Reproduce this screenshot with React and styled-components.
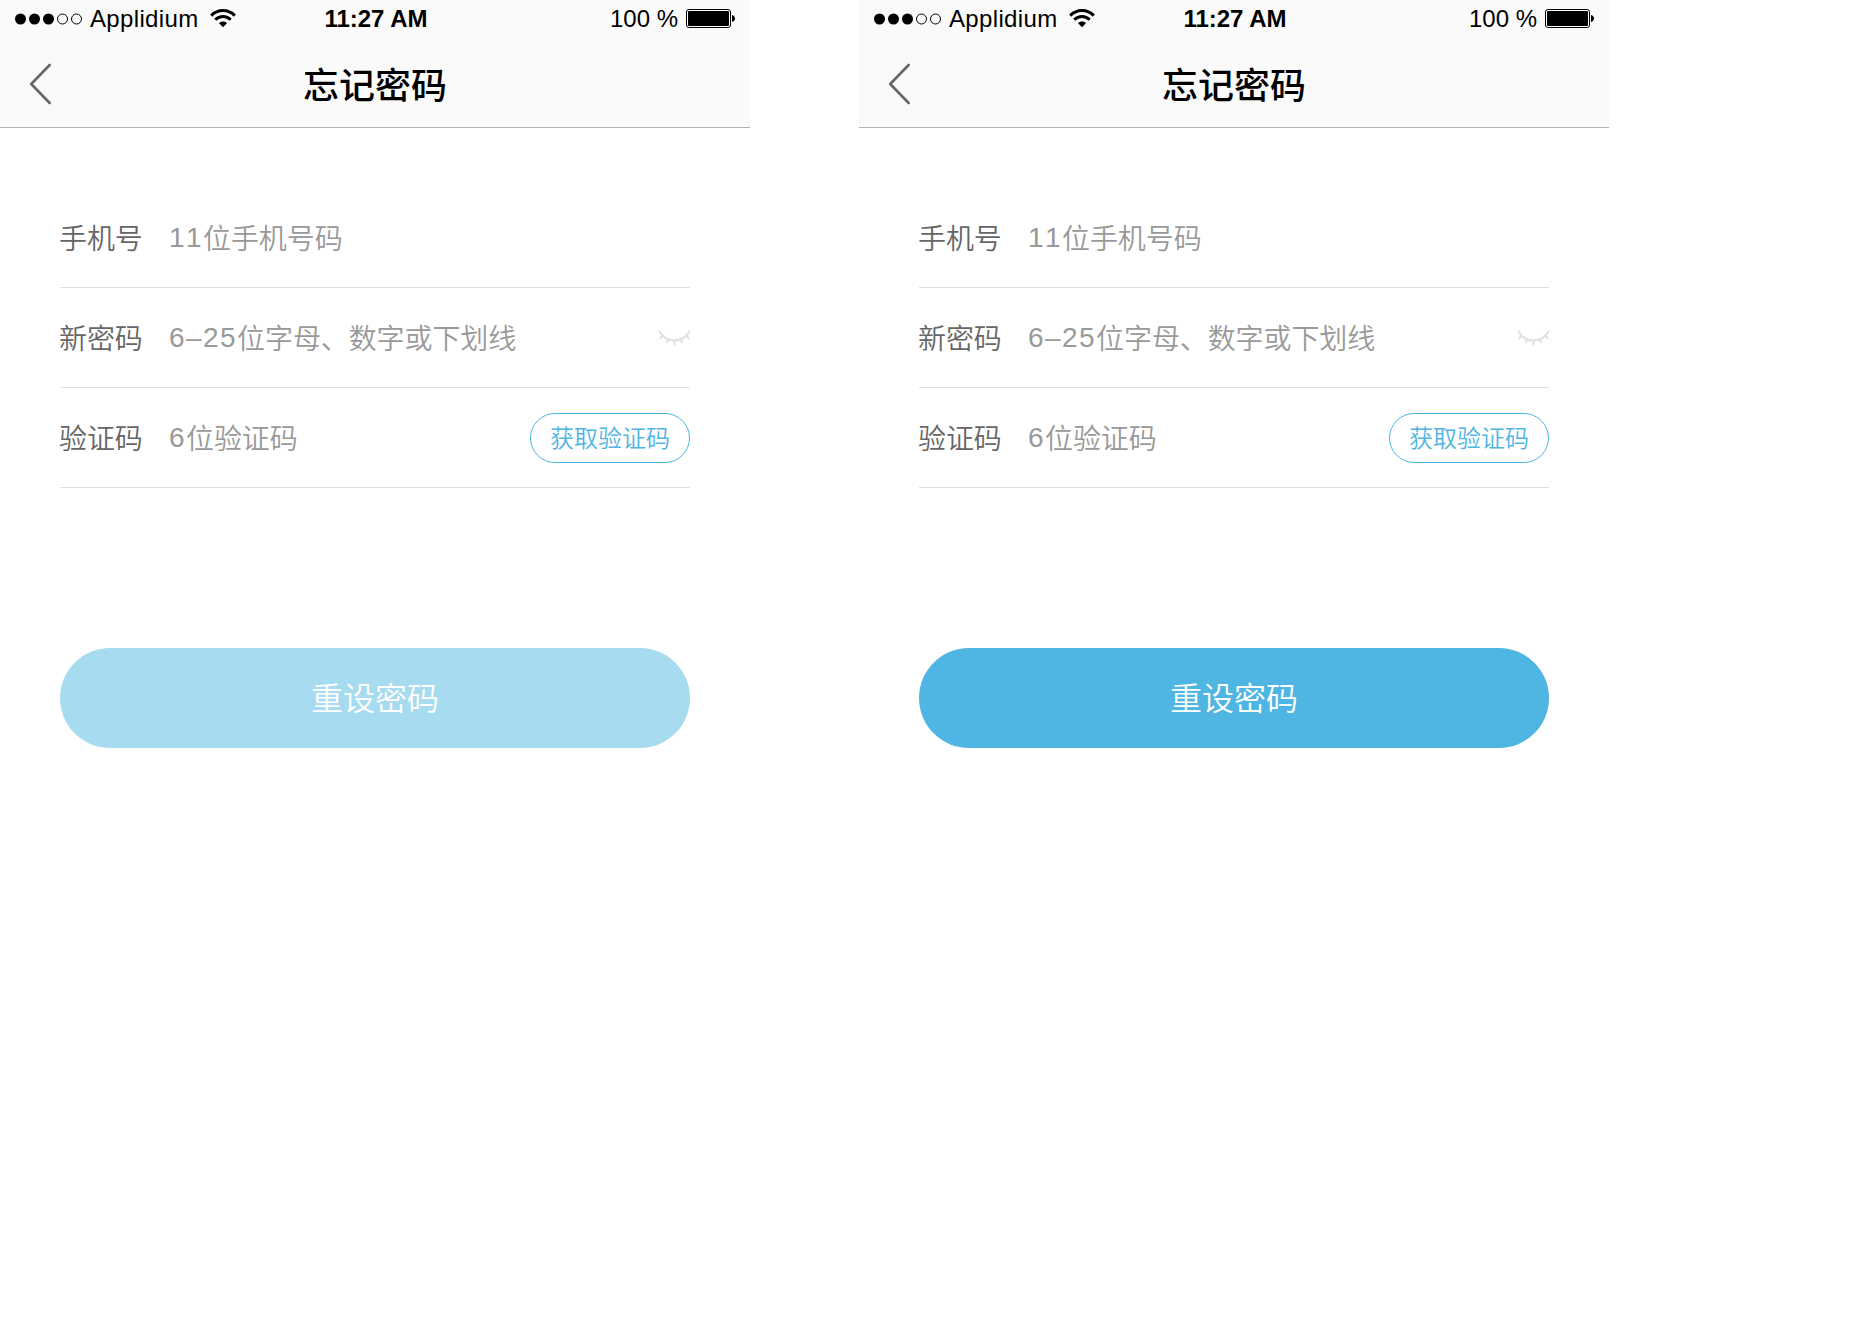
import React from "react";
import styled, { createGlobalStyle } from "styled-components";

const GlobalStyle = createGlobalStyle`
  body { margin: 0; background: #fff; }
  *, *::before, *::after { box-sizing: border-box; }
  button { font: inherit; padding: 0; border: 0; background: none; cursor: pointer; }
`;

const cjk = `"Noto Sans CJK SC", sans-serif`;
const latin = `"Liberation Sans", Arial, sans-serif`;

const Board = styled.main`
  display: flex;
  gap: 109px;
  width: 1854px;
  height: 1334px;
  overflow: hidden;
  background: #fff;
`;

const Phone = styled.section`
  display: flex;
  flex-direction: column;
  flex: none;
  width: 750px;
  height: 1334px;
  font-family: ${cjk};
`;

const Header = styled.header`
  height: 128px;
  background: #fafafa;
  border-bottom: 1px solid #b2b2b2;
`;

const StatusBar = styled.div`
  display: grid;
  grid-template-columns: 1fr auto 1fr;
  align-items: center;
  height: 37px;
  padding: 0 15px;
  font: 24px/37px ${latin};
  color: #000;
`;

const Carrier = styled.div`
  display: flex;
  align-items: center;
`;

const CarrierName = styled.span`
  margin: 0 11px 0 8px;
  letter-spacing: 0.35px;
`;

const Time = styled.span`
  padding-left: 2px;
  font-weight: 700;
`;

const Power = styled.div`
  display: flex;
  align-items: center;
  justify-content: flex-end;
  gap: 8px;
`;

const NavBar = styled.div`
  display: grid;
  grid-template-columns: 60px 1fr 60px;
  align-items: center;
  height: 90px;
`;

const BackButton = styled.button`
  display: flex;
  padding: 4px 0 0 28px;
`;

const Title = styled.h1`
  margin: 0;
  padding-top: 1px;
  font: 500 36px/52px ${cjk};
  text-align: center;
  color: #000;
`;

const Form = styled.form`
  display: flex;
  flex-direction: column;
  padding: 60px 60px 0;
`;

const Row = styled.label`
  display: flex;
  align-items: center;
  height: 100px;
  border-bottom: 1px solid #e0e0e0;
  font-size: 28px;
  line-height: 40px;
`;

const Label = styled.span`
  width: 110px;
  margin-left: -1px;
  padding-bottom: 1px;
  font-weight: 350;
  letter-spacing: -0.1px;
  color: #666;
`;

const Hint = styled.span`
  display: flex;
  flex: 1;
  align-items: center;
  padding-bottom: 1px;
  font-weight: 350;
  letter-spacing: -0.1px;
  color: #999;
`;

const Digits = styled.span`
  padding-top: 1px;
  font-family: ${latin};
  font-kerning: none;
  letter-spacing: 1.45px;
`;

const CodeButton = styled.button`
  width: 160px;
  height: 50px;
  border: 1px solid #4fb5e2;
  border-radius: 25px;
  padding-bottom: 2px;
  font: 350 24px/44px ${cjk};
  color: #4fb5e2;
`;

const EyeButton = styled.button`
  display: flex;
  margin-right: -1px;
`;

const SubmitButton = styled.button`
  height: 100px;
  margin-top: 160px;
  border-radius: 50px;
  padding-bottom: 4px;
  background: ${(p) => (p.$active ? "#4fb5e2" : "#a7dbf0")};
  font: 350 32px/96px ${cjk};
  color: #fff;
`;

function Signal() {
  return (
    <svg width="67" height="12" viewBox="0 0 67 12">
      {[0, 1, 2, 3, 4].map((i) => (
        <circle
          key={i}
          cx={5.5 + i * 14}
          cy="6"
          r={i < 3 ? 5.5 : 5}
          fill={i < 3 ? "#000" : "none"}
          stroke={i < 3 ? "none" : "#000"}
        />
      ))}
    </svg>
  );
}

function Wifi() {
  return (
    <svg width="26" height="19" viewBox="0 0 26 19" fill="none" stroke="#000">
      <path d="M1.2 6.6C7.8-.2 18.2-.2 24.8 6.6" strokeWidth="3" />
      <path d="M5.3 10.8C9.7 6.5 16.3 6.5 20.7 10.8" strokeWidth="3" />
      <path d="M13 18.2L8.9 14.1C11.2 12 14.8 12 17.1 14.1Z" fill="#000" stroke="none" />
    </svg>
  );
}

function Battery() {
  return (
    <svg width="49" height="19" viewBox="0 0 49 19">
      <rect x="0.5" y="0.5" width="44" height="18" rx="2.5" fill="#fff" stroke="#000" />
      <rect x="2" y="2" width="41" height="15" rx="1" fill="#000" />
      <path d="M46 6C48 6.6 49 8 49 9.5S48 12.400 46 13Z" fill="#000" />
    </svg>
  );
}

function ClosedEye() {
  return (
    <svg width="33" height="16" viewBox="0 0 33 16" fill="none" stroke="#e0e0e0" strokeWidth="2">
      <path d="M1 .8C8 13.700 25 13.700 32 .8" />
      <path d="M5 5.500L1.800 8.800M10.500 9.300L8.500 13M16.500 10.500V15.500M22.500 9.300L24.500 13M28 5.500L31.200 8.800" />
    </svg>
  );
}

function Screen({ active }) {
  return (
    <Phone>
      <Header>
        <StatusBar>
          <Carrier>
            <Signal />
            <CarrierName>Applidium</CarrierName>
            <Wifi />
          </Carrier>
          <Time>11:27 AM</Time>
          <Power>
            <span>100 %</span>
            <Battery />
          </Power>
        </StatusBar>
        <NavBar>
          <BackButton type="button" aria-label="返回">
            <svg width="24" height="42" viewBox="0 0 24 42" fill="none" stroke="#666" strokeWidth="2.6" strokeLinecap="round" strokeLinejoin="round">
              <path d="M21.700 2L3.200 21L21.700 40" />
            </svg>
          </BackButton>
          <Title>忘记密码</Title>
        </NavBar>
      </Header>
      <Form>
        <Row>
          <Label>手机号</Label>
          <Hint><Digits>11</Digits>位手机号码</Hint>
        </Row>
        <Row>
          <Label>新密码</Label>
          <Hint><Digits>6–25</Digits>位字母、数字或下划线</Hint>
          <EyeButton type="button" aria-label="显示密码"><ClosedEye /></EyeButton>
        </Row>
        <Row>
          <Label>验证码</Label>
          <Hint><Digits>6</Digits>位验证码</Hint>
          <CodeButton type="button">获取验证码</CodeButton>
        </Row>
        <SubmitButton type="button" $active={active}>重设密码</SubmitButton>
      </Form>
    </Phone>
  );
}

export default function App() {
  return (
    <>
      <GlobalStyle />
      <Board>
        <Screen active={false} />
        <Screen active />
      </Board>
    </>
  );
}
